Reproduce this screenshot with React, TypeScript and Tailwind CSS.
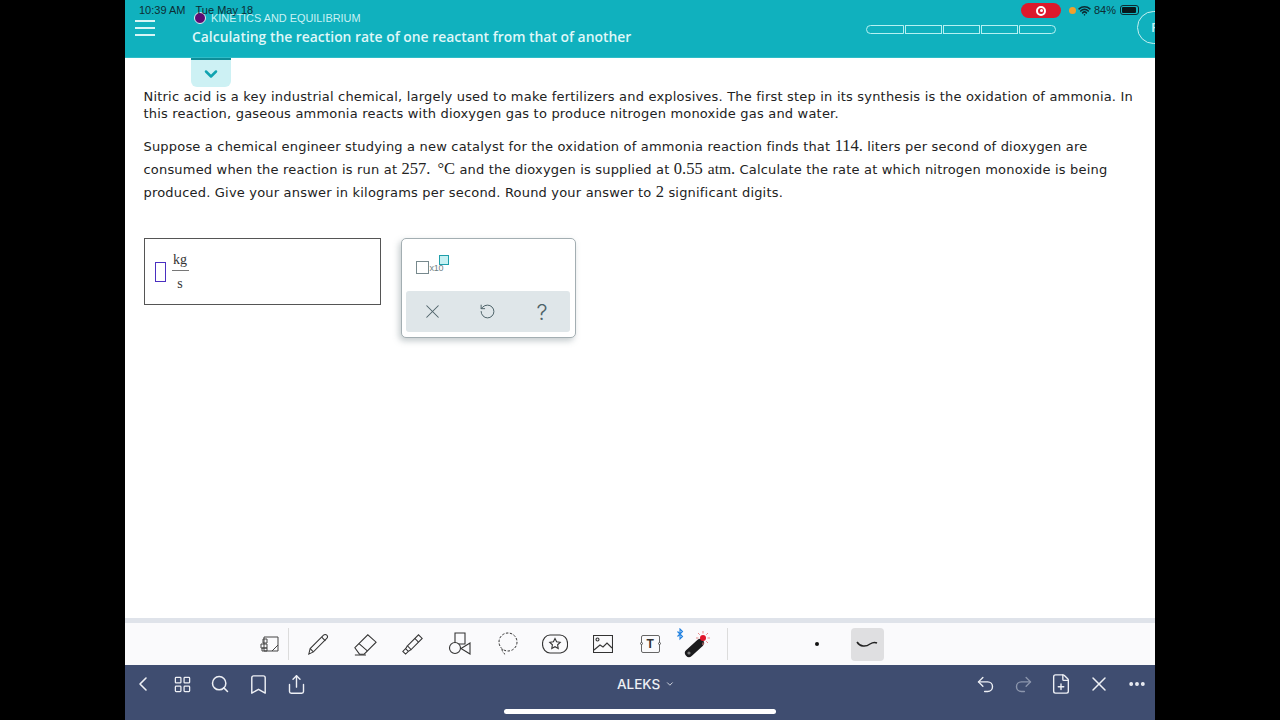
import { Bookmark, ChevronDown, ChevronLeft, Ellipsis, FilePlus, LayoutGrid, Redo2, RotateCcw, Search, Share, Undo2, Wifi, X } from "lucide-react"

const serif = "font-['Liberation_Serif',serif] text-[16.5px] leading-none tracking-normal"

function ProgressBar() {
  return (
    <div className="flex gap-[1px] mt-[25px] ml-[741px]">
      <div className="w-[38px] h-[9px] border border-[#b5f1f2] rounded-l-full" />
      <div className="w-[37px] h-[9px] border border-[#b5f1f2]" />
      <div className="w-[37px] h-[9px] border border-[#b5f1f2]" />
      <div className="w-[37px] h-[9px] border border-[#b5f1f2]" />
      <div className="w-[37px] h-[9px] border border-[#b5f1f2] rounded-r-full" />
    </div>
  )
}

function Header() {
  return (
    <div className="relative h-[58px] bg-[#10b1be] border-b border-[#2fbcc7] shrink-0 flex font-['Open_Sans',sans-serif] overflow-hidden">
      <div className="w-[67px] pt-[20px] pl-[10px] shrink-0">
        <div className="w-[20px] flex flex-col gap-[5px]">
          <div className="h-[2px] bg-[#d8f5f6]" />
          <div className="h-[2px] bg-[#d8f5f6]" />
          <div className="h-[2px] bg-[#d8f5f6]" />
        </div>
      </div>
      <div className="absolute left-0 top-[4px] w-[130px] text-[11px] leading-[13px] text-[#0d2c33] font-['Liberation_Sans',sans-serif] whitespace-nowrap pl-[14px]">
        10:39 AM <span className="ml-[7px]">Tue May 18</span>
      </div>
      <div className="pt-[11px] whitespace-nowrap">
        <div className="flex items-center ml-[2px] h-[14px] text-[10.9px] text-[#c9f2f4] font-['Liberation_Sans',sans-serif]">
          <span className="w-[12px] h-[12px] rounded-full bg-[#5c0a72] border border-[#d9f3f5] mr-[5px]" />
          KINETICS AND EQUILIBRIUM
        </div>
        <div className="mt-[3px] text-[13.9px] leading-[18px] font-semibold text-[#dff7f8]">
          Calculating the reaction rate of one reactant from that of another
        </div>
      </div>
      <div className="absolute left-0 top-0">
        <ProgressBar />
      </div>
      <div className="absolute left-[896px] top-[3px] w-[40px] h-[15px] rounded-full bg-[#dc1a2b] flex items-center justify-center">
        <div className="w-[10px] h-[10px] rounded-full border-2 border-white flex items-center justify-center">
          <div className="w-[3px] h-[3px] rounded-full bg-white" />
        </div>
      </div>
      <div className="absolute left-[944px] top-[7px] w-[7px] h-[7px] rounded-full bg-[#f0a02c]" />
      <Wifi className="absolute left-[953px] top-[4px] text-[#0c2b33]" size={13} strokeWidth={3} />
      <div className="absolute left-[969px] top-[4px] text-[11px] leading-[13px] text-[#0d2c33] font-['Liberation_Sans',sans-serif]">84%</div>
      <div className="absolute left-[995px] top-[5px] w-[19px] h-[10px] rounded-[3px] border border-[#0d2c33] p-[1px]">
        <div className="w-[14px] h-full rounded-[1px] bg-[#07181c]" />
      </div>
      <div className="absolute left-[1012px] top-[11px] w-[40px] h-[33px] rounded-full border border-[#c6f0f2] flex items-center pl-[13px] text-[13px] font-semibold text-[#c6f0f2]">
        P
      </div>
    </div>
  )
}

function Keypad() {
  return (
    <div className="w-[175px] h-[100px] rounded-[5px] border border-[#a3aeb2] bg-white shadow-[-2px_3px_6px_rgba(90,110,115,0.35)] pl-[4px] pr-[5px] pt-[5px]">
      <div className="h-[47px] relative">
        <div className="absolute left-[10px] top-[17px] w-[13px] h-[13px] border border-[#77898d]" />
        <div className="absolute left-[24px] top-[20px] text-[9px] leading-[9px] tracking-[-0.3px] text-[#6f8084] font-['Liberation_Sans',sans-serif]">x10</div>
        <div className="absolute left-[33px] top-[11px] w-[10px] h-[10px] border-[1.5px] border-[#1f9faa] bg-[#c6f1f3]" />
      </div>
      <div className="h-[41px] rounded-[3px] bg-[#dfe6e9] flex items-center text-[#4d6268]">
        <div className="w-[54px] flex justify-center"><X size={23} strokeWidth={1.1} /></div>
        <div className="w-[55px] flex justify-center"><RotateCcw size={17} strokeWidth={1.4} /></div>
        <div className="w-[55px] text-center text-[22px] font-['Inter',sans-serif] font-light leading-none">?</div>
      </div>
    </div>
  )
}

function PenToolbar() {
  return (
    <div className="h-[47px] shrink-0 border-t-[5px] border-[#dfe3ea] bg-[#fafafc] flex items-center text-[#222]">
      <div className="ml-[134px] w-[30px] h-[32px] border-r border-[#dcdcdc] pr-[9px] flex items-center justify-end">
        <svg width="20" height="16" viewBox="0 0 20 16" fill="none" stroke="#444" strokeWidth="1">
          <path d="M5 1h14v14H5z" />
          <path d="M19 9l-6 6" />
          <path d="M4 3h4v4H4zM2 8h6v4H2zM3 12h5v3H3z" />
        </svg>
      </div>
      <div className="flex items-center ml-[5px] text-[#333]">
        <div className="w-[47.500px] flex justify-center">
          <svg width="24" height="24" viewBox="0 0 26 26" fill="none" stroke="#333" strokeWidth="1.1">
            <path d="M3 24l1.500-6L19 3.500c1-1 2.500-1 3.500 0s1 2.500 0 3.500L8 21.500 3 24z" />
            <path d="M17 5.500l4 4M4.500 18l3.500 3.500" />
          </svg>
        </div>
        <div className="w-[47.500px] flex justify-center">
          <svg width="25" height="24" viewBox="0 0 27 26" fill="none" stroke="#333" strokeWidth="1.1">
            <path d="M2 17L16 3l9 8-13 13H7z" />
            <path d="M6.500 12.500l9 8M2 25h12" />
          </svg>
        </div>
        <div className="w-[47.500px] flex justify-center">
          <svg width="25" height="24" viewBox="0 0 25 26" fill="none" stroke="#333" strokeWidth="1.1">
            <path d="M7 15L19 3l4 4-12 12z" />
            <path d="M7 15l-2 3 3 3 3-2M5 18l-3 3 3 3 3-3" />
            <path d="M15 7l4 4" />
          </svg>
        </div>
        <div className="w-[47.500px] flex justify-center">
          <svg width="24" height="26" viewBox="0 0 24 26" fill="none" stroke="#333" strokeWidth="1.1">
            <path d="M7 2h10v11H7z" />
            <circle cx="7" cy="17" r="5.500" fill="#fafafc" />
            <path d="M22 12v11l-9-5.500z" fill="#fafafc" />
          </svg>
        </div>
        <div className="w-[47.500px] flex justify-center">
          <svg width="22" height="24" viewBox="0 0 22 24" fill="none" stroke="#333" strokeWidth="1" strokeDasharray="2.500 1.500">
            <circle cx="11" cy="10" r="9" />
            <path d="M5 17c0 2 1 4 4 6" />
          </svg>
        </div>
        <div className="w-[47.500px] flex justify-center">
          <svg width="26" height="20" viewBox="0 0 26 20" fill="none" stroke="#333" strokeWidth="1.1">
            <path d="M8 1h10a7.500 8 0 0 1 7.500 8v1a7 8 0 0 1-4 8l-3 1H8a7.500 9 0 0 1 0-18z" />
            <path d="M13 4.500l1.600 3.300 3.600.5-2.600 2.500.6 3.600-3.200-1.700-3.200 1.700.6-3.600-2.600-2.500 3.600-.5z" />
          </svg>
        </div>
        <div className="w-[47.500px] flex justify-center">
          <svg width="20" height="18" viewBox="0 0 20 18" fill="none" stroke="#333" strokeWidth="1.1">
            <path d="M.500.500h19v17H.500z" />
            <circle cx="4.500" cy="4.500" r="1.500" />
            <path d="M1 15l6-5 3 2 4-4 5 5" />
          </svg>
        </div>
        <div className="w-[47.500px] flex justify-center">
          <div className="relative w-[19px] h-[18px] border border-[#666] rounded-[2px] flex items-center justify-center text-[12px] font-bold font-['Liberation_Sans',sans-serif] leading-none">
            T
            <span className="absolute -left-[2px] top-[6px] w-[3px] h-[3px] rounded-full bg-[#fafafc] border-[0.5px] border-[#555]" />
            <span className="absolute -right-[2px] top-[6px] w-[3px] h-[3px] rounded-full bg-[#fafafc] border-[0.5px] border-[#555]" />
          </div>
        </div>
        <div className="w-[47.500px] flex justify-center">
          <svg width="34" height="32" viewBox="0 0 34 32" fill="none" className="-ml-[9px]">
            <path d="M1.500 3.500l5 5-2.500 2.500V1l2.500 2.500-5 5" stroke="#1d7fe0" strokeWidth="1.100" />
            <path d="M13 25L24 15" stroke="#1b1b1d" strokeWidth="8" strokeLinecap="round" />
            <circle cx="13" cy="25" r="1.600" fill="#777" />
            <circle cx="27" cy="10" r="3" fill="#e0162b" />
            <path d="M27 3v2.500M27 14.500V17M20 10h2.500M31.500 10H34M22 5l1.800 1.800M30.200 13.200L32 15M32 5l-1.800 1.800" stroke="#e98a8a" strokeWidth="1" />
          </svg>
        </div>
      </div>
      <div className="ml-[5px] h-[32px] border-l border-[#dcdcdc] w-[124px] flex items-center pl-[87px]">
        <div className="w-[4px] h-[4px] rounded-full bg-[#111]" />
      </div>
      <div className="w-[33px] h-[33px] rounded-[4px] bg-[#dfdfe1] flex items-center justify-center">
        <svg width="24" height="10" viewBox="0 0 24 10" fill="none" stroke="#222" strokeWidth="1.500">
          <path d="M2 3c3 5 9 5 13 2 3-2 5-2 7-1" />
        </svg>
      </div>
    </div>
  )
}

function BottomBar() {
  return (
    <div className="h-[55px] shrink-0 bg-[#3f4d70] relative text-[#eef0f5] font-['Inter',sans-serif]">
      <div className="flex items-center h-[38px]">
        <div className="w-[38px] flex justify-center pr-[2px]"><ChevronLeft size={24} strokeWidth={1.6} /></div>
        <div className="w-[38px] flex justify-center"><LayoutGrid size={19} strokeWidth={1.6} /></div>
        <div className="w-[38px] flex justify-center"><Search size={20} strokeWidth={1.8} /></div>
        <div className="w-[38px] flex justify-center"><Bookmark size={23} strokeWidth={1.5} /></div>
        <div className="w-[38px] flex justify-center"><Share size={21} strokeWidth={1.6} /></div>
        <div className="ml-[302px] w-[58px] text-center text-[13.5px] font-medium flex items-center justify-center gap-[5px] whitespace-nowrap">
          ALEKS <ChevronDown size={10} strokeWidth={2} />
        </div>
        <div className="ml-[291px] w-[38px] flex justify-center"><Undo2 size={21} strokeWidth={1.6} /></div>
        <div className="w-[38px] flex justify-center text-[#8c96ad]"><Redo2 size={21} strokeWidth={1.6} /></div>
        <div className="w-[38px] flex justify-center"><FilePlus size={22} strokeWidth={1.5} /></div>
        <div className="w-[38px] flex justify-center"><X size={24} strokeWidth={1.5} /></div>
        <div className="w-[37px] flex justify-center"><Ellipsis size={20} strokeWidth={2.6} /></div>
      </div>
      <div className="absolute left-[379px] bottom-[6px] w-[272px] h-[5px] rounded-full bg-white" />
    </div>
  )
}

export default function App() {
  return (
    <div className="w-[1280px] h-[720px] bg-black overflow-hidden">
      <div className="w-[1030px] h-full ml-[125px] bg-white flex flex-col">
        <Header />
        <div className="flex-1 relative pl-[18.500px] font-['DejaVu_Sans',sans-serif] text-[13px] text-[#222]">
          <div className="absolute left-[66px] top-0 w-[40px] h-[29px] rounded-b-[6px] bg-[#cdf1f4] border-t-2 border-[#0e8d98] flex items-center justify-center text-[#11a3b0]">
            <ChevronDown size={20} strokeWidth={3} />
          </div>
          <div className="pt-[30px] leading-[17px] whitespace-nowrap tracking-[0.2px]">
            <div>Nitric acid is a key industrial chemical, largely used to make fertilizers and explosives. The first step in its synthesis is the oxidation of ammonia. In</div>
            <div>this reaction, gaseous ammonia reacts with dioxygen gas to produce nitrogen monoxide gas and water.</div>
          </div>
          <div className="mt-[13px] leading-[23px] whitespace-nowrap tracking-[0.19px]">
            <div>Suppose a chemical engineer studying a new catalyst for the oxidation of ammonia reaction finds that <span className={serif}>114.</span> liters per second of dioxygen are</div>
            <div>consumed when the reaction is run at <span className={serif}>257. <span className="ml-[3px]">°C</span></span> and the dioxygen is supplied at <span className={serif}>0.55 <span className="ml-[1px] text-[15.5px]">atm</span>.</span> Calculate the rate at which nitrogen monoxide is being</div>
            <div>produced. Give your answer in kilograms per second. Round your answer to <span className={serif}>2</span> significant digits.</div>
          </div>
          <div className="flex items-start gap-[20px] mt-[34px]">
            <div className="w-[237px] h-[67px] border border-[#555] flex items-center pl-[10px]">
              <div className="w-[11px] h-[20px] border-[1.5px] border-[#4a2fc0]" />
              <div className="ml-[6px] w-[17px] flex flex-col items-center font-['Liberation_Serif',serif] text-[14px] text-[#333] leading-[15px]">
                <span className="pb-[3px]">kg</span>
                <div className="w-full h-[1.500px] bg-[#777]" />
                <span className="pt-[5px]">s</span>
              </div>
            </div>
            <Keypad />
          </div>
        </div>
        <PenToolbar />
        <BottomBar />
      </div>
    </div>
  )
}
